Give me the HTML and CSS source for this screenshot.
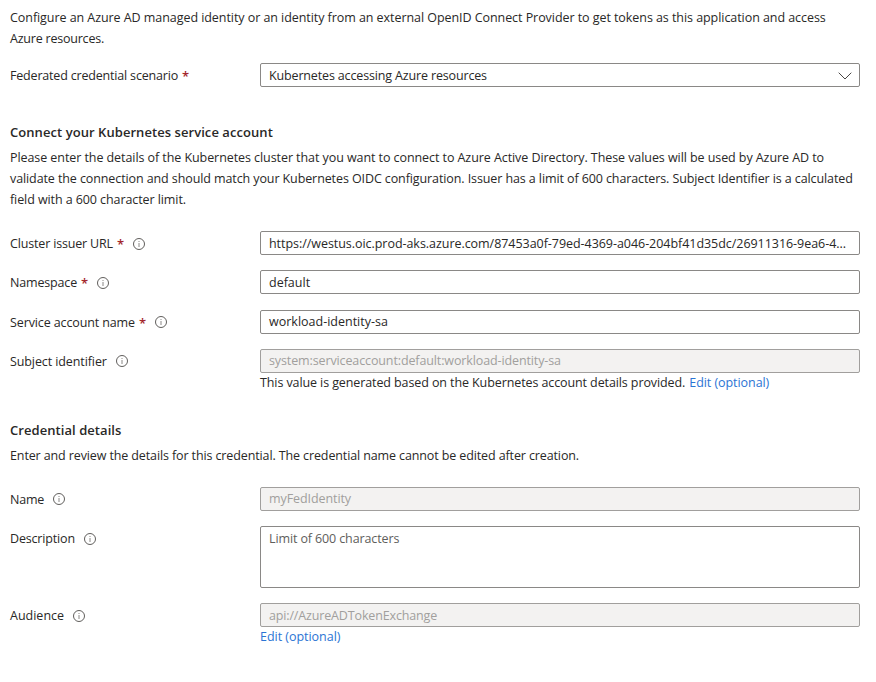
FILE: index.html
```html
<!DOCTYPE html>
<html lang="en">
<head>
<meta charset="utf-8">
<title>Federated credential</title>
<link rel="stylesheet" href="styles.css">
</head>
<body>
<svg width="0" height="0" class="defs" aria-hidden="true">
  <symbol id="info" viewBox="0 0 12 12">
    <circle cx="6" cy="6" r="5.5" fill="none" stroke="#605e5c" stroke-width="1"/>
    <path d="M6 5v4M6 3v1" fill="none" stroke="#8a8886" stroke-width="1"/>
  </symbol>
</svg>
<main class="form">
  <div class="copy intro">
    <p class="t06">Configure an Azure AD managed identity or an identity from an external OpenID Connect Provider to get tokens as this application and access</p>
    <p class="t21">Azure resources.</p>
  </div>
  <div class="field scenario">
    <label class="label"><span class="t18">Federated credential scenario</span><b class="req">*</b></label>
    <div class="box select"><span class="t15">Kubernetes accessing Azure resources</span>
      <svg class="chevron" viewBox="0 0 14 8"><path d="M.7.7 7 7 13.3.7" fill="none" stroke="#484644" stroke-width="1"/></svg>
    </div>
  </div>

  <section class="account">
    <h2>Connect your Kubernetes service account</h2>
    <div class="copy">
      <p class="t07">Please enter the details of the Kubernetes cluster that you want to connect to Azure Active Directory. These values will be used by Azure AD to</p>
      <p class="t10">validate the connection and should match your Kubernetes OIDC configuration. Issuer has a limit of 600 characters. Subject Identifier is a calculated</p>
      <p class="t08">field with a 600 character limit.</p>
    </div>
    <div class="fields">
      <div class="field">
        <label class="label"><span class="t16">Cluster issuer URL</span><b class="req">*</b><svg class="info"><use href="#info"/></svg></label>
        <div class="box"><span class="t045">https://westus.oic.prod-aks.azure.com/87453a0f-79ed-4369-a046-204bf41d35dc/26911316-9ea6-4...</span></div>
      </div>
      <div class="field">
        <label class="label"><span class="t16">Namespace</span><b class="req">*</b><svg class="info"><use href="#info"/></svg></label>
        <div class="box"><span>default</span></div>
      </div>
      <div class="field late">
        <label class="label"><span class="t12">Service account name</span><b class="req">*</b><svg class="info high"><use href="#info"/></svg></label>
        <div class="box raised"><span>workload-identity-sa</span></div>
      </div>
      <div class="field">
        <label class="label"><span class="t10">Subject identifier</span><svg class="info high"><use href="#info"/></svg></label>
        <div>
          <div class="box disabled raised"><span class="t12">system:serviceaccount:default:workload-identity-sa</span></div>
          <div class="hint"><span class="t10">This value is generated based on the Kubernetes account details provided.</span><a class="t06">Edit (optional)</a></div>
        </div>
      </div>
    </div>
  </section>

  <section class="credential">
    <h2>Credential details</h2>
    <div class="copy"><p class="t12">Enter and review the details for this credential. The credential name cannot be edited after creation.</p></div>
    <div class="fields">
      <div class="field">
        <label class="label"><span class="t21">Name</span><svg class="info high"><use href="#info"/></svg></label>
        <div class="box disabled raised"><span class="t08">myFedIdentity</span></div>
      </div>
      <div class="field">
        <label class="label"><span class="t16">Description</span><svg class="info"><use href="#info"/></svg></label>
        <div class="box area"><span class="t12">Limit of 600 characters</span></div>
      </div>
      <div class="field">
        <label class="label"><span>Audience</span><svg class="info"><use href="#info"/></svg></label>
        <div>
          <div class="box disabled"><span class="t15">api://AzureADTokenExchange</span></div>
          <div class="hint"><a class="t03">Edit (optional)</a></div>
        </div>
      </div>
    </div>
  </section>
</main>
</body>
</html>
```
FILE: styles.css
```css
* { box-sizing: border-box; }
body {
  margin: 0;
  background: #fff;
  color: #292827;
  font: 12.5px/21px "Open Sans", "Noto Sans", sans-serif;
}
.defs { display: block; }
.form { padding: 7px 16px 0 10px; }
.copy p { margin: 0; white-space: nowrap; }

.field { display: grid; grid-template-columns: 250px 1fr; align-items: start; }
.scenario { margin-top: 14px; }
.label { display: flex; align-items: center; height: 24px; padding-top: 1px; white-space: nowrap; }
.req { margin-left: 4px; color: #a4262c; font-size: 13px; font-weight: 600; line-height: 20px; }
.info { width: 12px; height: 12px; margin-left: 9px; margin-top: 1px; flex: none; }
.high { margin-top: -1px; }
.req + .info { margin-left: 9px; }

.box {
  display: flex;
  align-items: center;
  justify-content: space-between;
  height: 24px;
  padding: 1px 8px 0;
  border: 1px solid #8a8886;
  border-radius: 2px;
  white-space: nowrap;
}
.select { padding-right: 7px; }
.raised { padding-top: 0; padding-bottom: 1px; }
.disabled { background: #f3f2f1; border-color: #a19f9d; color: #a19f9d; }
.area { height: 62px; align-items: flex-start; color: #605e5c; }
.chevron { width: 14px; height: 8px; }

h2 { margin: 0 0 4px; font-size: 13px; font-weight: 600; line-height: 21px; letter-spacing: .06px; }
.account { margin-top: 35px; }
.fields { display: flex; flex-direction: column; gap: 15px; margin-top: 21px; }
.late { margin-top: 1px; }
.hint { display: flex; gap: 4px; height: 20px; line-height: 19px; white-space: nowrap; }
.hint a { color: #2b74d4; }
.credential { margin-top: 27px; }

.t03 { letter-spacing: -.03px; }
.t045 { letter-spacing: -.045px; }
.t06 { letter-spacing: -.06px; }
.t07 { letter-spacing: -.072px; }
.t08 { letter-spacing: -.085px; }
.t10 { letter-spacing: -.1px; }
.t12 { letter-spacing: -.118px; }
.t15 { letter-spacing: -.15px; }
.t16 { letter-spacing: -.165px; }
.t18 { letter-spacing: -.184px; }
.t21 { letter-spacing: -.215px; }
```
